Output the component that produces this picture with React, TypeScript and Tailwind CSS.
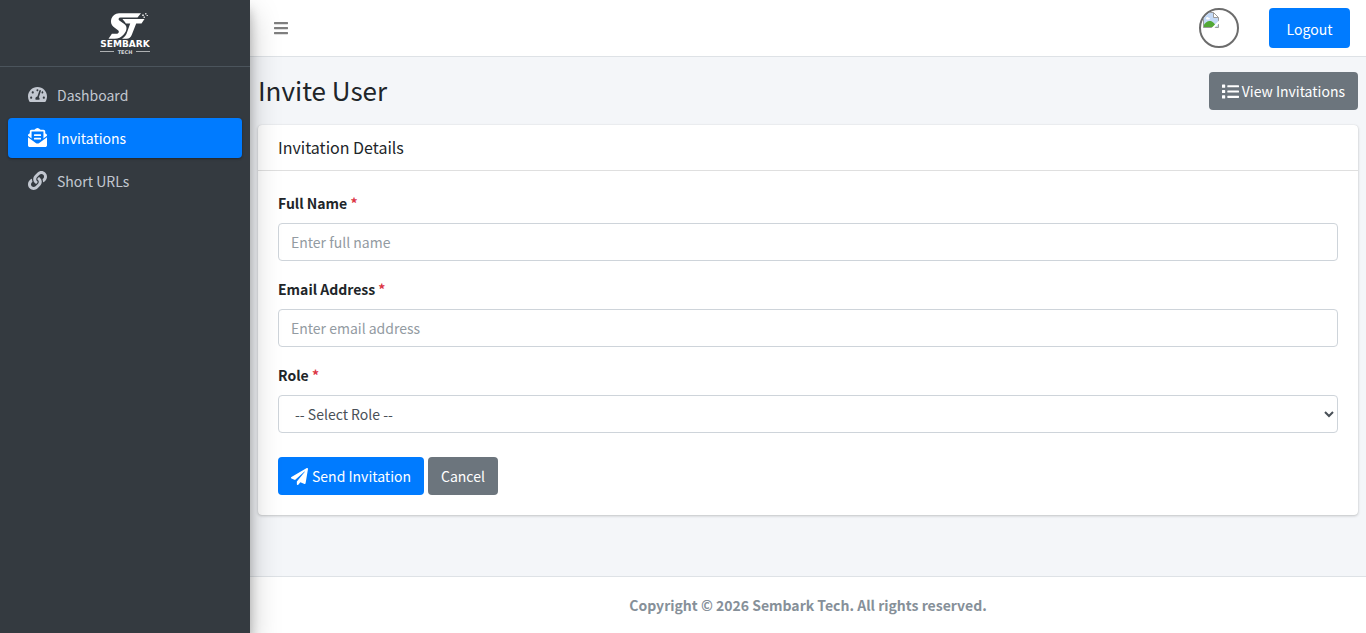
import { useState } from "react";
import type { ReactNode } from "react";
import {
  FaBars,
  FaEnvelopeOpenText,
  FaLink,
  FaList,
  FaPaperPlane,
  FaTachometerAlt,
} from "react-icons/fa";
import type { IconType } from "react-icons";

interface NavItem {
  label: string;
  icon: IconType;
}

const navItems: NavItem[] = [
  { label: "Dashboard", icon: FaTachometerAlt },
  { label: "Invitations", icon: FaEnvelopeOpenText },
  { label: "Short URLs", icon: FaLink },
];

const fieldClass =
  "block h-[38px] w-full rounded border border-[#ced4da] bg-white text-sm leading-6 text-[#495057] outline-none placeholder:text-[#939ba2] focus:border-[#80bdff]";

function Logo() {
  return (
    <svg viewBox="0 0 50 43" className="h-[43px] w-[50px]" role="img" aria-label="Sembark Tech">
      <g fill="#fff">
        <path d="M19 1.200H41L37.500 5.500H20.500c-2 0-2.600 2-1.200 3l5 3.600c3.200 2.400 2.800 6.600-.4 10.200-2.800 3.200-5.400 4.500-9.400 4.500H8.500l3.400-5h4.300c2.600 0 3.400-2.400 1.800-3.600l-4.300-3.200C8.500 11 11 1.500 19 1.200z" />
        <path d="M22.500 7H44.500L41.500 11.500h-5.300l-4.400 11.300c-1 2.600-2.700 4-5.300 4H22c3-2.200 4.200-4 5-6.400l3.200-8.900h-4.400C25 9.500 23.700 9 22.500 7z" />
        <path d="M42 2.500h2v1.500h-2zM43.500 4.500h1.500V6h-1.500zM45 1h1.500v1.500H45zM46.500 3h1.500v1h-1.500z" opacity=".75" />
        <path d="M0 39h14v1H0zM36 39h14v1H36z" opacity=".6" />
      </g>
      <text x="25" y="35" textAnchor="middle" fill="#fff" fontSize="9" fontWeight="700" fontFamily="DejaVu Sans, sans-serif">
        SEMBARK
      </text>
      <text x="25" y="42" textAnchor="middle" fill="#d5d7da" fontSize="5" fontWeight="700" fontFamily="DejaVu Sans, sans-serif">
        TECH
      </text>
    </svg>
  );
}

function MissingImage() {
  return (
    <svg viewBox="0 0 16 16" className="size-4" aria-hidden="true">
      <path d="M.5.5h10l5 5v10H.5z" fill="#c3d9f7" />
      <path d="M3 6.500c0-1.500 2-2 2.500-.8C7 5.200 7.500 7.500 6 7.500H3.500z" fill="#fff" />
      <path d="M.5 15.500v-2C2 10.500 5 8.500 7.500 9c2.500.5 5 3.500 6 6.500z" fill="#52a836" />
      <path d="M10.500.5v5h5z" fill="#fff" />
      <path d="M.5 15.500V.5h10l5 5v10zM10.500.5v5h5" fill="none" stroke="#9b9b9b" />
      <path d="M8 16.500 16.500 8v3L11 16.500z" fill="#fff" />
    </svg>
  );
}

function Sidebar() {
  const [active, setActive] = useState("Invitations");

  return (
    <aside className="relative z-10 w-[250px] shrink-0 bg-[#343a40] shadow-[0_14px_28px_rgba(0,0,0,0.25),0_10px_10px_rgba(0,0,0,0.22)]">
      <a href="#" className="flex h-[67px] justify-center border-b border-[#4b545c] pt-3">
        <Logo />
      </a>
      <nav className="flex flex-col gap-[3px] p-2">
        {navItems.map(({ label, icon: Icon }) => (
          <a
            key={label}
            href="#"
            onClick={() => setActive(label)}
            className={`flex h-10 items-center gap-[6px] rounded px-4 text-sm ${
              active === label
                ? "bg-[#007bff] text-white shadow-[0_1px_3px_rgba(0,0,0,0.12),0_1px_2px_rgba(0,0,0,0.24)]"
                : "text-[#c2c7d0]"
            }`}
          >
            <span className="flex w-[27px] justify-center pb-0.5">
              <Icon className="h-[19px] w-auto" />
            </span>
            {label}
          </a>
        ))}
      </nav>
    </aside>
  );
}

function Field({ id, label, children }: { id: string; label: string; children: ReactNode }) {
  return (
    <div className="mb-4">
      <label htmlFor={id} className="mb-2 block text-sm leading-6 font-bold">
        {label} <span className="text-[#dc3545]">*</span>
      </label>
      {children}
    </div>
  );
}

export default function App() {
  return (
    <div className="flex min-h-screen overflow-hidden bg-[#f4f6f9] font-['Noto_Sans_CJK_SC',sans-serif] text-[#212529]">
      <Sidebar />

      <div className="flex min-w-0 flex-1 flex-col">
        <header className="flex h-[57px] items-center border-b border-[#dee2e6] bg-white pr-4 pl-[23px]">
          <button type="button" aria-label="Toggle sidebar" className="text-black/50">
            <FaBars className="h-4 w-auto" />
          </button>
          <div className="ml-auto flex items-center gap-[30px]">
            <a href="#" aria-label="Profile" className="block size-10 overflow-hidden rounded-full border-2 border-[#6c6c6c] p-0.5">
              <MissingImage />
            </a>
            <button type="button" className="h-10 w-[81px] rounded bg-[#007bff] pt-0.5 text-sm text-white">
              Logout
            </button>
          </div>
        </header>

        <main className="flex-1 px-2 pt-[15px] pb-[60px]">
          <div className="mb-[15px] flex items-start justify-between">
            <h1 className="text-[26px] leading-9">Invite User</h1>
            <a
              href="#"
              className="flex h-[38px] items-center gap-[3px] rounded bg-[#6c757d] px-[13px] text-sm text-white"
            >
              <FaList className="size-[17px]" />
              View Invitations
            </a>
          </div>

          <section className="rounded bg-white shadow-[0_0_1px_rgba(0,0,0,0.125),0_1px_3px_rgba(0,0,0,0.2)]">
            <div className="flex h-[46px] items-center border-b border-black/[0.125] px-5 pb-0.5">
              <h3 className="text-base leading-6">Invitation Details</h3>
            </div>
            <form className="p-5" onSubmit={(e) => e.preventDefault()}>
              <Field id="name" label="Full Name">
                <input id="name" type="text" placeholder="Enter full name" className={`${fieldClass} px-3`} />
              </Field>
              <Field id="email" label="Email Address">
                <input id="email" type="email" placeholder="Enter email address" className={`${fieldClass} px-3`} />
              </Field>
              <Field id="role" label="Role">
                <select id="role" className={`${fieldClass} pl-3`}>
                  <option>-- Select Role --</option>
                  <option>Admin</option>
                  <option>Member</option>
                </select>
              </Field>
              <div className="mt-6 flex gap-1">
                <button
                  type="submit"
                  className="flex h-[38px] items-center gap-1 rounded bg-[#007bff] px-[13px] text-sm text-white"
                >
                  <FaPaperPlane className="size-[17px]" />
                  Send Invitation
                </button>
                <a href="#" className="flex h-[38px] items-center rounded bg-[#6c757d] px-[13px] text-sm text-white">
                  Cancel
                </a>
              </div>
            </form>
          </section>
        </main>

        <footer className="border-t border-[#dee2e6] bg-white p-4 text-center text-sm leading-6 font-bold text-[#869099]">
          Copyright © 2026 Sembark Tech. All rights reserved.
        </footer>
      </div>
    </div>
  );
}
